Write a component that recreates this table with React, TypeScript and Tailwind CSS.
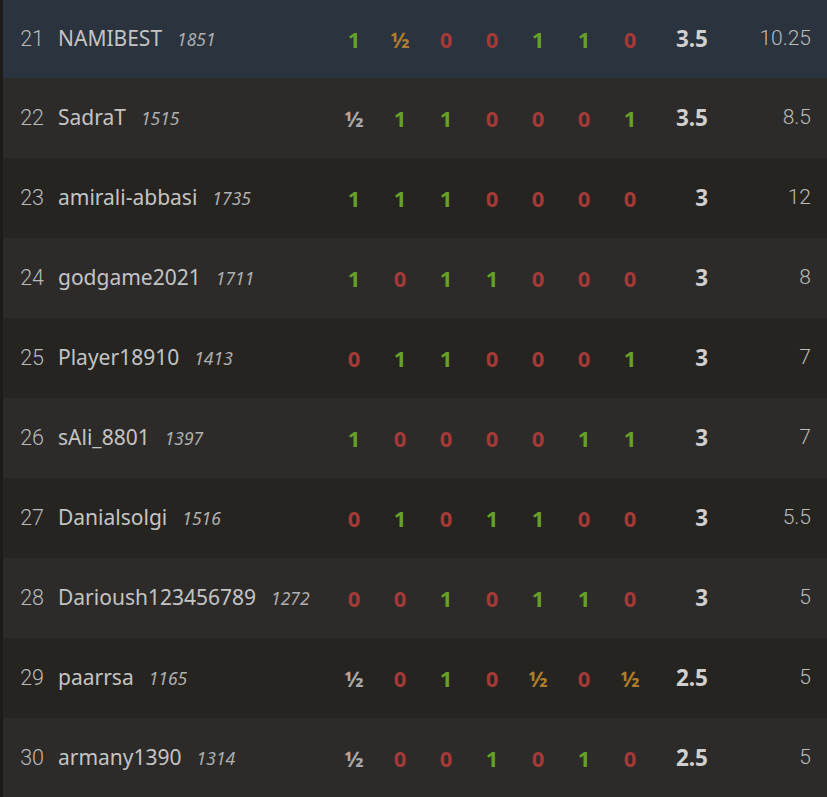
type Res = "1" | "0" | "h" | "g";

interface Row {
  rank: number;
  name: string;
  rating: number;
  results: Res[];
  score: string;
  tb: string;
  me?: boolean;
}

const rows: Row[] = [
  { rank: 21, name: "NAMIBEST", rating: 1851, results: ["1", "h", "0", "0", "1", "1", "0"], score: "3.5", tb: "10.25", me: true },
  { rank: 22, name: "SadraT", rating: 1515, results: ["g", "1", "1", "0", "0", "0", "1"], score: "3.5", tb: "8.5" },
  { rank: 23, name: "amirali-abbasi", rating: 1735, results: ["1", "1", "1", "0", "0", "0", "0"], score: "3", tb: "12" },
  { rank: 24, name: "godgame2021", rating: 1711, results: ["1", "0", "1", "1", "0", "0", "0"], score: "3", tb: "8" },
  { rank: 25, name: "Player18910", rating: 1413, results: ["0", "1", "1", "0", "0", "0", "1"], score: "3", tb: "7" },
  { rank: 26, name: "sAli_8801", rating: 1397, results: ["1", "0", "0", "0", "0", "1", "1"], score: "3", tb: "7" },
  { rank: 27, name: "Danialsolgi", rating: 1516, results: ["0", "1", "0", "1", "1", "0", "0"], score: "3", tb: "5.5" },
  { rank: 28, name: "Darioush123456789", rating: 1272, results: ["0", "0", "1", "0", "1", "1", "0"], score: "3", tb: "5" },
  { rank: 29, name: "paarrsa", rating: 1165, results: ["g", "0", "1", "0", "h", "0", "h"], score: "2.5", tb: "5" },
  { rank: 30, name: "armany1390", rating: 1314, results: ["g", "0", "0", "1", "0", "1", "0"], score: "2.5", tb: "5" },
];

function Result({ r }: { r: Res }) {
  if (r === "1") return <span className="text-[#66a026]">1</span>;
  if (r === "0") return <span className="text-[#a33a38]">0</span>;
  if (r === "h") return <span className="text-[#b07d2c]">½</span>;
  return <span className="text-[#a8a8a8]">½</span>;
}

export default function App() {
  return (
    <div className="w-[827px] h-[797px] overflow-hidden bg-[#1e1d1b] border-l-[3px] border-[#1c1b19]">
      {rows.map((row, i) => (
        <div
          key={row.rank}
          className={
            "flex items-center " +
            (i === 0 ? "h-[78px] " : "h-[80px] ") +
            (row.me ? "bg-[#2a333e]" : i % 2 === 1 ? "bg-[#2d2b29]" : "bg-[#262421]")
          }
        >
          <div className="w-[41px] text-right text-[21.5px] text-[#bababa] font-light [font-family:Roboto,sans-serif]">
            {row.rank}
          </div>
          <div className="flex-1 flex items-center pl-[14px] [font-family:'Noto_Sans',sans-serif]">
            <span className="text-[21px] text-[#c4c4c4]">{row.name}</span>
            <span className="ml-[15px] text-[17.5px] italic text-[#b0b0b0]">{row.rating}</span>
          </div>
          <div className="flex [font-family:'Noto_Sans',sans-serif] font-bold text-[22px]">
            {row.results.map((r, j) => (
              <div key={j} className="w-[46px] text-center">
                <Result r={r} />
              </div>
            ))}
          </div>
          <div className="w-[55px] text-right [font-family:'Noto_Sans',sans-serif] font-bold text-[22.5px] text-[#d0d0d0]">
            {row.score}
          </div>
          <div className="w-[103px] text-right text-[21px] font-light text-[#bababa] [font-family:Roboto,sans-serif]">
            {row.tb}
          </div>
          <div className="w-[16px]" />
        </div>
      ))}
    </div>
  );
}
